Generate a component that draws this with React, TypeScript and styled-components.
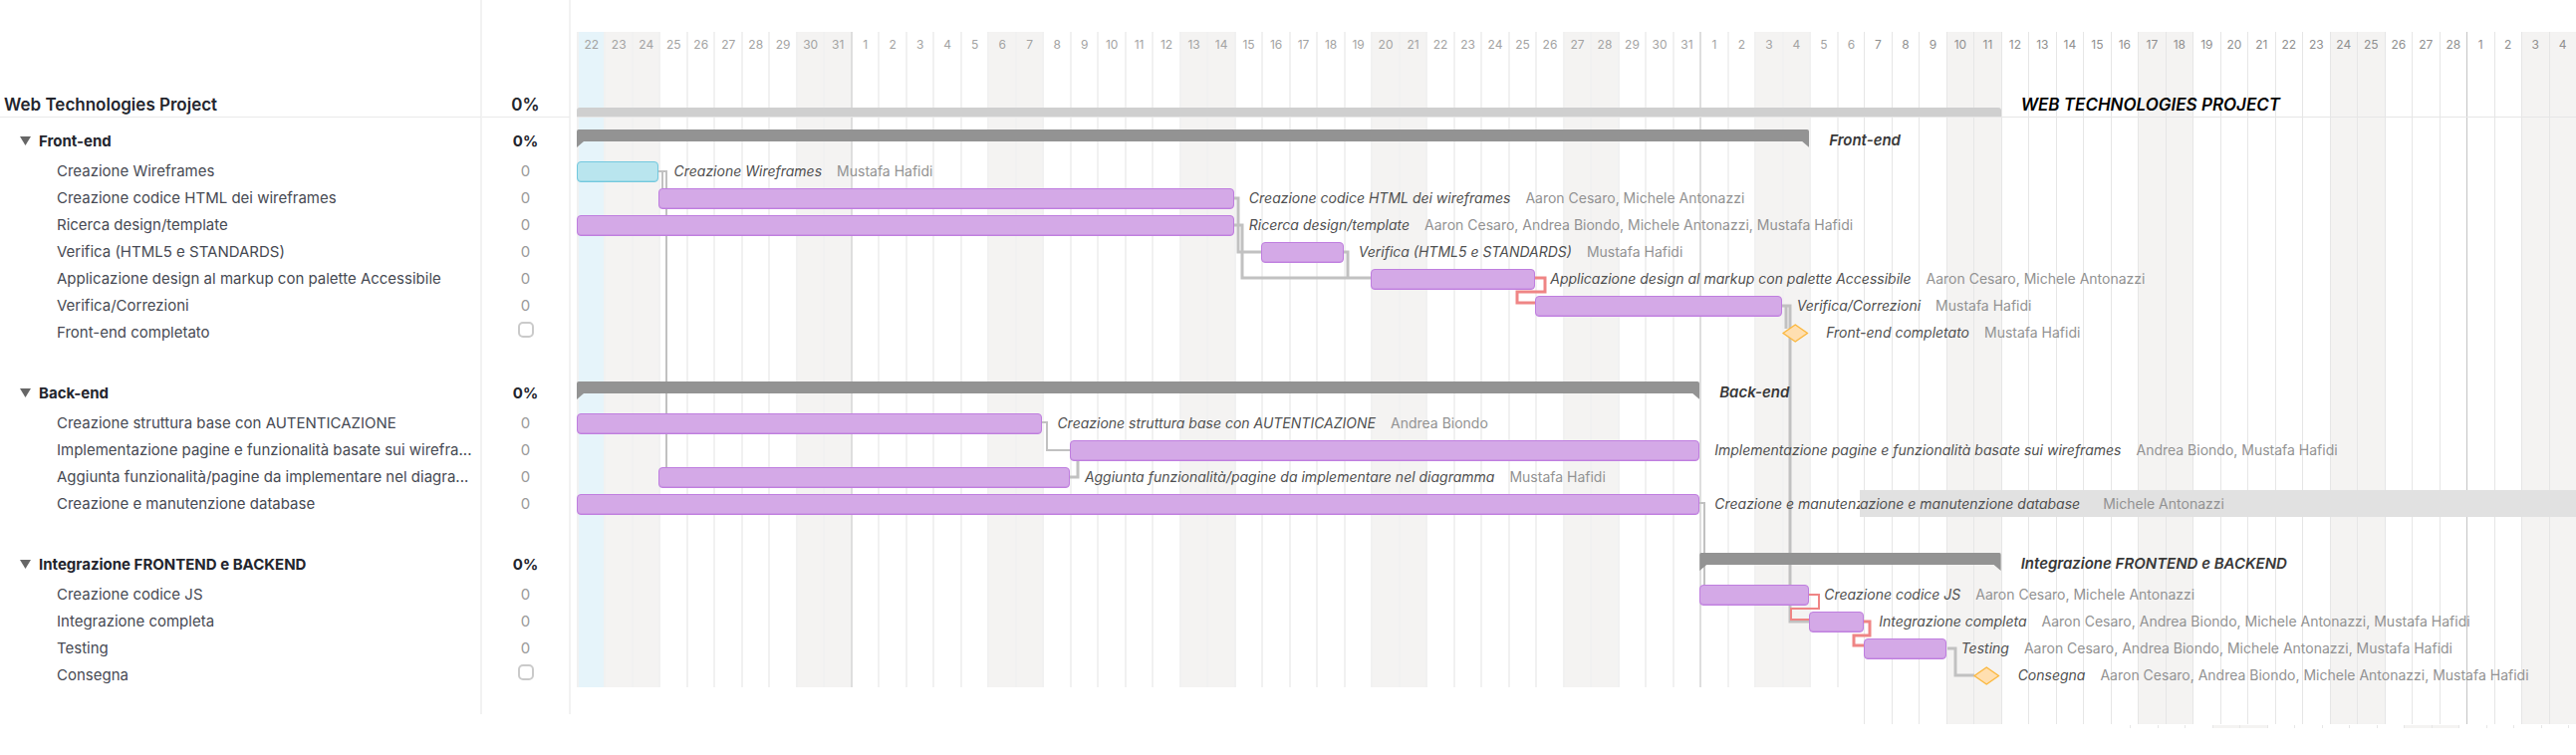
import React from "react";
import styled, { createGlobalStyle } from "styled-components";

const DAYS = 73;

const GlobalStyle = createGlobalStyle`
  * { box-sizing: border-box; }
  body {
    margin: 0;
    background: #fff;
    font-family: Inter, "Open Sans", sans-serif;
    color: #474a53;
  }
`;

/* ---------- data ---------- */

type Kind = "task" | "active" | "milestone";

interface Task {
  name: string;
  people: string;
  start: number;
  end: number;
  kind?: Kind;
  listName?: string;
  chartName?: string;
}

interface Group {
  name: string;
  start: number;
  end: number;
  tasks: Task[];
}

const AARON = "Aaron Cesaro";
const ANDREA = "Andrea Biondo";
const MICHELE = "Michele Antonazzi";
const MUSTAFA = "Mustafa Hafidi";
const everyone = [AARON, ANDREA, MICHELE, MUSTAFA].join(", ");
const aaronMichele = [AARON, MICHELE].join(", ");

const groups: Group[] = [
  {
    name: "Front-end",
    start: 0,
    end: 45,
    tasks: [
      { name: "Creazione Wireframes", people: MUSTAFA, start: 0, end: 3, kind: "active" },
      { name: "Creazione codice HTML dei wireframes", people: aaronMichele, start: 3, end: 24 },
      { name: "Ricerca design/template", people: everyone, start: 0, end: 24 },
      { name: "Verifica (HTML5 e STANDARDS)", people: MUSTAFA, start: 25, end: 28 },
      { name: "Applicazione design al markup con palette Accessibile", people: aaronMichele, start: 29, end: 35 },
      { name: "Verifica/Correzioni", people: MUSTAFA, start: 35, end: 44 },
      { name: "Front-end completato", people: MUSTAFA, start: 44, end: 45, kind: "milestone" },
    ],
  },
  {
    name: "Back-end",
    start: 0,
    end: 41,
    tasks: [
      { name: "Creazione struttura base con AUTENTICAZIONE", people: ANDREA, start: 0, end: 17 },
      {
        name: "Implementazione pagine e funzionalità basate sui wireframes",
        listName: "Implementazione pagine e funzionalità basate sui wirefra...",
        people: [ANDREA, MUSTAFA].join(", "),
        start: 18,
        end: 41,
      },
      {
        name: "Aggiunta funzionalità/pagine da implementare nel diagramma",
        listName: "Aggiunta funzionalità/pagine da implementare nel diagra...",
        people: MUSTAFA,
        start: 3,
        end: 18,
      },
      {
        name: "Creazione e manutenzione database",
        chartName: "Creazione e manutenz",
        people: "",
        start: 0,
        end: 41,
      },
    ],
  },
  {
    name: "Integrazione FRONTEND e BACKEND",
    start: 41,
    end: 52,
    tasks: [
      { name: "Creazione codice JS", people: aaronMichele, start: 41, end: 45 },
      { name: "Integrazione completa", people: everyone, start: 45, end: 47 },
      { name: "Testing", people: everyone, start: 47, end: 50 },
      { name: "Consegna", people: everyone, start: 51, end: 52, kind: "milestone" },
    ],
  },
];

const range = (from: number, to: number) => Array.from({ length: to - from + 1 }, (_, i) => from + i);
const dates = [...range(22, 31), ...range(1, 31), ...range(1, 28), ...range(1, 4)];

/* ---------- page ---------- */

const Page = styled.main`
  display: flex;
  align-items: flex-start;
  gap: 6px;
  overflow: hidden;
`;

/* ---------- task list ---------- */

const TaskTable = styled.table`
  flex: none;
  width: 573px;
  table-layout: fixed;
  border-collapse: separate;
  border-spacing: 0;
  font-size: 15px;
  line-height: 20px;
`;

const NameCol = styled.col`
  width: 484px;
`;

const Cell = styled.td<{ $indent?: number }>`
  padding: 0 0 0 ${(p) => p.$indent ?? 0}px;
  border-right: 2px solid #f2f2f2;
  text-align: left;
  font-weight: 400;
  white-space: nowrap;
`;

const ProgressCell = styled(Cell)`
  padding: 0;
  text-align: center;
  color: #999;
`;

const ProjectRow = styled.tr`
  height: 118px;
  vertical-align: bottom;
  font-size: 17px;
  color: #23252d;
  ${Cell} {
    padding-bottom: 2px;
    border-bottom: 1px solid #e9e9e9;
    font-weight: 600;
    color: inherit;
  }
`;

const GroupRow = styled.tr<{ $first: boolean }>`
  height: ${(p) => (p.$first ? 40 : 64)}px;
  vertical-align: bottom;
  font-size: 15px;
  color: #23252d;
  ${Cell} {
    padding-bottom: 6px;
    font-weight: 700;
    color: inherit;
  }
`;

const TaskRow = styled.tr`
  height: 27px;
`;

const FooterRow = styled.tr`
  height: 26px;
`;

const Toggle = styled.button`
  width: 19px;
  height: 12px;
  margin: 0;
  padding: 0;
  border: 0;
  background: none;
  text-align: left;
  cursor: pointer;
  svg {
    display: block;
  }
`;

const DoneBox = styled.input`
  appearance: none;
  display: block;
  width: 16px;
  height: 16px;
  margin: 0 auto 5px;
  border: 2px solid #cacaca;
  border-radius: 5px;
  background: #fff;
`;

/* ---------- chart ---------- */

const Chart = styled.section`
  flex: 1;
  min-width: 0;
`;

const Layers = styled.div`
  display: grid;
  grid-template-columns: minmax(0, 1fr);
  > * {
    grid-area: 1 / 1;
  }
`;

const DayGrid = styled.div`
  display: grid;
  grid-template-columns: repeat(${DAYS}, minmax(0, 1fr));
  align-items: start;
  padding-top: 32px;
`;

const Day = styled.div<{ $fill: string; $month: boolean; $late: boolean }>`
  height: ${(p) => (p.$late ? 695 : 658)}px;
  padding-top: 5px;
  border-left: ${(p) =>
    p.$late ? `1px solid ${p.$month ? "#c4c4c4" : "#e6e6e6"}` : `2px solid ${p.$month ? "#dedede" : "#f1f1f1"}`};
  background: ${(p) => p.$fill};
  color: ${(p) => (p.$late ? "#8f8f8f" : "#a3a3a3")};
  font-size: 12px;
  line-height: 16px;
  text-align: center;
`;

const Links = styled.svg`
  display: block;
  width: 100%;
  height: 690px;
  fill: none;
  path {
    vector-effect: non-scaling-stroke;
  }
`;

const Rows = styled.div``;

const Track = styled.div`
  position: relative;
  display: grid;
  grid-template-columns: repeat(${DAYS}, minmax(0, 1fr));
  align-items: center;
  height: 27px;
`;

const ProjectTrack = styled(Track)`
  height: 118px;
  align-items: end;
  border-bottom: 1px solid #e6e6e6;
`;

const GroupTrack = styled(Track)<{ $first: boolean }>`
  height: ${(p) => (p.$first ? 40 : 64)}px;
  align-items: end;
`;

const Span = styled.div.attrs<{ $start: number; $end: number }>((p) => ({
  style: { gridColumn: `${p.$start + 1} / ${p.$end + 1}` },
}))<{ $start: number; $end: number }>`
  grid-row: 1;
`;

const ProjectBar = styled(Span)`
  height: 9px;
  border-radius: 3px 3px 0 0;
  background: #cfcfcf;
`;

const GroupBar = styled(Span)`
  height: 18px;
  margin-bottom: 10px;
  border-radius: 2px 2px 0 0;
  background: #939393;
  clip-path: polygon(0 0, 100% 0, 100% 100%, calc(100% - 7px) 12px, 7px 12px, 0 100%);
`;

const TaskBar = styled(Span)<{ $active: boolean }>`
  height: 21px;
  margin-top: 2px;
  border: 1px solid ${(p) => (p.$active ? "#73c8de" : "#bf7edf")};
  border-radius: 4px;
  background: ${(p) => (p.$active ? "#b9e5ee" : "#d4a9e7")};
  box-shadow: inset 0 -1px 0 ${(p) => (p.$active ? "#9fdae7" : "#cb97e3")};
`;

const Milestone = styled(Span)`
  display: flex;
  margin-top: 2px;
  svg {
    display: block;
    width: 100%;
    height: 19px;
  }
`;

const Label = styled(Span)<{ $gap: number }>`
  display: flex;
  gap: 15px;
  padding-left: ${(p) => p.$gap}px;
  font-size: 14px;
  line-height: 20px;
  white-space: nowrap;
`;

const Title = styled.span`
  font-style: italic;
  font-feature-settings: "cv11";
  color: #505050;
`;

const People = styled.span`
  color: #929292;
`;

const GroupTitle = styled(Title)`
  padding-bottom: 7px;
  font-size: 15px;
  font-weight: 600;
  color: #383838;
`;

const ProjectTitle = styled(Title)`
  padding-bottom: 2px;
  font-size: 17px;
  font-weight: 600;
  color: #000;
`;

const Highlight = styled.div`
  position: absolute;
  top: 0;
  right: 0;
  bottom: 0;
  left: 64.17%;
  display: flex;
  align-items: center;
  gap: 23px;
  overflow: hidden;
  background: #e1e1e1;
  font-size: 14px;
  line-height: 20px;
  white-space: nowrap;
`;

const Strip = styled.div`
  display: flex;
  height: 3px;
  margin: 1px 0 0 77.7%;
  overflow: hidden;
`;

const StripDay = styled.div<{ $weekend: boolean }>`
  flex: 0 0 6.145%;
  border-left: 1px solid #e6e6e6;
  background: ${(p) => (p.$weekend ? "#f4f3f2" : "transparent")};
`;

/* ---------- parts ---------- */

const GRAY = "#c1c1c1";
const RED = "#ef8585";

const linkPaths: { d: string; color: string; width: number }[] = [
  { d: "M82 172H90V469", color: GRAY, width: 2 },
  { d: "M86 172V189", color: GRAY, width: 2 },
  { d: "M660 199H664V253H687", color: GRAY, width: 3 },
  { d: "M660 226H668V279H797", color: GRAY, width: 3 },
  { d: "M770 253H774V279", color: GRAY, width: 3 },
  { d: "M1210 307H1218V624H1237", color: GRAY, width: 3 },
  { d: "M1214 307V330", color: GRAY, width: 3 },
  { d: "M467 424H472V452H495", color: GRAY, width: 2 },
  { d: "M495 479H503V462", color: GRAY, width: 3 },
  { d: "M1127 505H1132V587", color: GRAY, width: 2 },
  { d: "M1376 651H1384V678H1403", color: GRAY, width: 3 },
  { d: "M962 279H972V293H944V304H962", color: RED, width: 3 },
  { d: "M1237 597H1247V611H1219V622H1237", color: RED, width: 2 },
  { d: "M1292 624H1298V638H1282V648H1292", color: RED, width: 3 },
];

function Triangle() {
  return (
    <svg width="11" height="9" viewBox="0 0 11 9" aria-hidden="true">
      <path d="M0 0H11L5.5 9Z" fill="#666" />
    </svg>
  );
}

function Diamond() {
  return (
    <svg viewBox="0 0 28 19" preserveAspectRatio="none" aria-hidden="true">
      <path d="M1 9.5L13.5 1L26 9.5L13.5 18Z" fill="#ffdfb0" stroke="#fbb83f" strokeWidth="1.5" strokeLinejoin="round" />
    </svg>
  );
}

function TaskList() {
  return (
    <TaskTable>
      <colgroup>
        <NameCol />
        <col />
      </colgroup>
      <tbody>
        <ProjectRow>
          <Cell as="th" scope="row" $indent={4}>Web Technologies Project</Cell>
          <ProgressCell>0%</ProgressCell>
        </ProjectRow>
      </tbody>
      {groups.map((group, g) => (
        <tbody key={group.name}>
          <GroupRow $first={g === 0}>
            <Cell as="th" scope="rowgroup" $indent={20}>
              <Toggle type="button" aria-label={group.name} aria-expanded="true">
                <Triangle />
              </Toggle>
              {group.name}
            </Cell>
            <ProgressCell>0%</ProgressCell>
          </GroupRow>
          {group.tasks.map((task) => (
            <TaskRow key={task.name}>
              <Cell as="th" scope="row" $indent={57}>{task.listName ?? task.name}</Cell>
              <ProgressCell>
                {task.kind === "milestone" ? <DoneBox type="checkbox" aria-label={task.name} /> : "0"}
              </ProgressCell>
            </TaskRow>
          ))}
        </tbody>
      ))}
      <tfoot>
        <FooterRow>
          <Cell />
          <ProgressCell />
        </FooterRow>
      </tfoot>
    </TaskTable>
  );
}

function TaskTrack({ task }: { task: Task }) {
  const milestone = task.kind === "milestone";
  return (
    <Track>
      {milestone ? (
        <Milestone $start={task.start} $end={task.end}>
          <Diamond />
        </Milestone>
      ) : (
        <TaskBar $start={task.start} $end={task.end} $active={task.kind === "active"} />
      )}
      <Label $start={task.end} $end={DAYS} $gap={milestone ? 17 : 15}>
        <Title>{task.chartName ?? task.name}</Title>
        {task.people && <People>{task.people}</People>}
      </Label>
      {task.chartName && (
        <Highlight>
          <Title>azione e manutenzione database</Title>
          <People>{MICHELE}</People>
        </Highlight>
      )}
    </Track>
  );
}

function dayFill(i: number) {
  if (i === 0) return "#e6f4fa";
  return i % 7 === 1 || i % 7 === 2 ? "#f4f3f2" : "transparent";
}

export default function App() {
  return (
    <>
      <GlobalStyle />
      <Page>
        <TaskList />
        <Chart>
          <Layers>
            <DayGrid>
              {dates.map((date, i) => (
                <Day key={i} $fill={dayFill(i)} $month={i > 0 && date === 1} $late={i >= 47}>
                  {date}
                </Day>
              ))}
            </DayGrid>
            <Links viewBox="0 0 2007 690" preserveAspectRatio="none" aria-hidden="true">
              {linkPaths.map((link) => (
                <path key={link.d} d={link.d} stroke={link.color} strokeWidth={link.width} />
              ))}
            </Links>
            <Rows>
              <ProjectTrack>
                <ProjectBar $start={0} $end={52} />
                <Label $start={52} $end={DAYS} $gap={20}>
                  <ProjectTitle>WEB TECHNOLOGIES PROJECT</ProjectTitle>
                </Label>
              </ProjectTrack>
              {groups.map((group, g) => (
                <React.Fragment key={group.name}>
                  <GroupTrack $first={g === 0}>
                    <GroupBar $start={group.start} $end={group.end} />
                    <Label $start={group.end} $end={DAYS} $gap={20}>
                      <GroupTitle>{group.name}</GroupTitle>
                    </Label>
                  </GroupTrack>
                  {group.tasks.map((task) => (
                    <TaskTrack key={task.name} task={task} />
                  ))}
                </React.Fragment>
              ))}
            </Rows>
          </Layers>
          <Strip>
            {range(0, 16).map((i) => (
              <StripDay key={i} $weekend={i % 7 === 3 || i % 7 === 4} />
            ))}
          </Strip>
        </Chart>
      </Page>
    </>
  );
}
